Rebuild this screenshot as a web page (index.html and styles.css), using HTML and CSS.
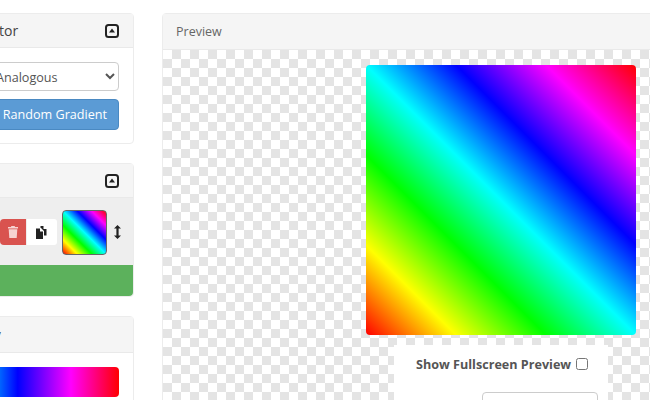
FILE: index.html
```html
<!DOCTYPE html>
<html lang="en">
<head>
  <meta charset="UTF-8" />
  <title>Gradient Generator</title>
  <link rel="stylesheet" href="styles.css">
</head>
<body>
  <div class="page">
    <div class="sidebar">
      <div class="panel">
        <div class="panel-head">
          <span>Generator</span>
          <svg class="toggle" viewBox="0 0 14 14"><rect x="1" y="1" width="12" height="12" rx="2.5" fill="none" stroke="#222" stroke-width="2"/><path d="M7 4.6 10 8.6H4Z" fill="#222"/></svg>
        </div>
        <div class="panel-body">
          <select class="mode"><option>Analogous</option></select>
          <button class="random">Random Gradient</button>
        </div>
      </div>

      <div class="panel">
        <div class="panel-head">
          <span></span>
          <svg class="toggle" viewBox="0 0 14 14"><rect x="1" y="1" width="12" height="12" rx="2.5" fill="none" stroke="#222" stroke-width="2"/><path d="M7 4.6 10 8.6H4Z" fill="#222"/></svg>
        </div>
        <div class="stops">
          <button class="icon-btn del">
            <svg width="10" height="12" viewBox="0 0 10 12"><path d="M3.4 0h3.2l.5 1H10v1.4H0V1h2.9ZM.7 3.2h8.6L8.7 12H1.3Z" fill="#f6d3d1"/></svg>
          </button>
          <button class="icon-btn copy">
            <svg width="12" height="13" viewBox="0 0 12 13"><path d="M0 2.500h4v3h3v7.500H0Z" fill="#222"/><path d="M4.500 0h3v3h3v6.500H8V5L5 2H4.500Z" fill="#222"/></svg>
          </button>
          <div class="thumb"></div>
          <svg class="move" width="7" height="14" viewBox="0 0 7 14"><path d="M3.500 0 7 3.600H4.600v6.800H7L3.500 14 0 10.400h2.400V3.600H0Z" fill="#222"/></svg>
        </div>
        <button class="add">Add</button>
      </div>

      <div class="panel">
        <div class="panel-head tall"><span>Overlay</span></div>
        <div class="panel-body">
          <div class="hue-bar"></div>
        </div>
      </div>
    </div>

    <div class="panel preview">
      <div class="panel-head"><span>Preview</span></div>
      <div class="checker">
        <div class="swatch"></div>
        <div class="options">
          <label class="full">Show Fullscreen Preview <input type="checkbox"></label>
          <div class="size-box"></div>
        </div>
      </div>
    </div>
  </div>
</body>
</html>
```

FILE: styles.css
```css
html, body {
  margin: 0;
  height: 400px;
  overflow: hidden;
  background: #fff;
}

body {
  font-family: "Open Sans", sans-serif;
  font-size: 14px;
  color: #333;
}

.page {
  display: flex;
  align-items: flex-start;
  gap: 28px;
  margin-left: -62px;
  padding-top: 13px;
  width: 760px;
}

.sidebar {
  width: 196px;
  flex: none;
  display: flex;
  flex-direction: column;
  gap: 19px;
}

.panel {
  background: #fff;
  border: 1px solid #ececec;
  border-radius: 4px;
  box-sizing: border-box;
}

.panel-head {
  display: flex;
  justify-content: space-between;
  align-items: center;
  height: 33px;
  padding: 0 14px 0 12px;
  background: #f5f5f5;
  border-bottom: 1px solid #e9e9e9;
  color: #444;
}

.panel-head.tall {
  height: 35px;
}

.toggle {
  width: 14px;
  height: 14px;
}

.panel-body {
  padding: 14px 14px 13px;
}

.mode {
  display: block;
  width: 100%;
  height: 29px;
  padding: 2px 0 0 38px;
  font-family: inherit;
  font-size: 12.6px;
  color: #555;
  background: #fff;
  border: 1px solid #ccc;
  border-radius: 4px;
}

.random {
  display: block;
  width: 100%;
  height: 31px;
  margin-top: 8px;
  padding: 0 11px 0 0;
  text-align: right;
  font-family: inherit;
  font-size: 12.6px;
  color: #fff;
  background: #5b9bd5;
  border: 1px solid #4a89c2;
  border-radius: 4px;
}

.stops {
  display: flex;
  align-items: center;
  justify-content: flex-end;
  height: 66px;
  padding: 1px 12px 0 0;
  background: #eee;
}

.icon-btn {
  display: flex;
  align-items: center;
  justify-content: center;
  height: 26px;
  padding: 0;
  border: none;
}

.del {
  width: 26px;
  background: #d9534f;
  border-radius: 4px 0 0 4px;
}

.copy {
  width: 30px;
  margin-left: 1px;
  background: #fff;
  border-radius: 0 3px 3px 0;
}

.thumb {
  width: 45px;
  height: 45px;
  margin-left: 5px;
  box-sizing: border-box;
  border: 1px solid #666;
  border-radius: 4px;
  background: linear-gradient(45deg, #f00, #ff0, #0f0, #0ff, #00f, #f0f, #f00);
}

.move {
  margin-left: 7px;
}

.add {
  display: block;
  width: 100%;
  height: 31px;
  color: #fff;
  font-family: inherit;
  font-size: 14px;
  text-align: left;
  background: #5cb15c;
  border: none;
  border-radius: 0 0 4px 4px;
}

.hue-bar {
  height: 30px;
  border-radius: 4px;
  background: linear-gradient(90deg, #ff0 0%, #0f0 6%, #0ff 12%, #00f 39%, #f0f 71%, #f00 100%);
}

.preview {
  flex: none;
  width: 530px;
}

.preview .panel-head {
  height: 35px;
  padding-left: 13px;
  font-size: 12.5px;
  color: #666;
}

.checker {
  height: 350px;
  padding-top: 15px;
  padding-left: 203px;
  background-color: #fff;
  background-image:
    linear-gradient(45deg, #e4e4e4 25%, transparent 25%, transparent 75%, #e4e4e4 75%),
    linear-gradient(45deg, #e4e4e4 25%, transparent 25%, transparent 75%, #e4e4e4 75%);
  background-size: 18px 18px;
  background-position: 0 0, 9px 9px;
}

.swatch {
  width: 270px;
  height: 270px;
  border-radius: 4px;
  background: linear-gradient(45deg, #f00, #ff0, #0f0, #0ff, #00f, #f0f, #f00);
}

.options {
  width: 214px;
  height: 70px;
  margin: 10px 0 0 28px;
  background: #fff;
  box-sizing: border-box;
  padding: 11px 0 0 22px;
}

.full {
  display: flex;
  align-items: center;
  gap: 5px;
  font-size: 12.6px;
  font-weight: 700;
  color: #555;
}

.full input {
  width: 12px;
  height: 12px;
  margin: 0 0 2px;
}

.size-box {
  width: 116px;
  height: 40px;
  margin: 19px 0 0 66px;
  box-sizing: border-box;
  border: 1px solid #ccc;
  border-radius: 4px;
}
```
